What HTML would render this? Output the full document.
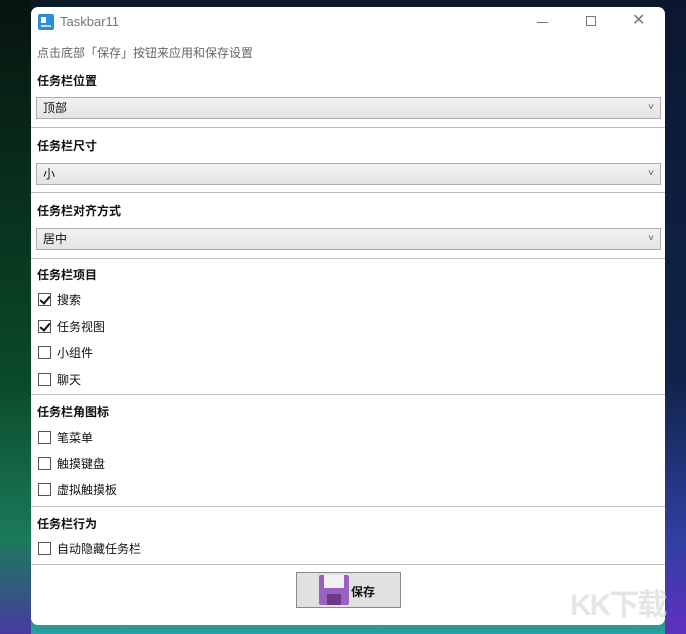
<!DOCTYPE html>
<html><head><meta charset="utf-8"><style>
*{margin:0;padding:0;box-sizing:border-box}
body{width:686px;height:634px;overflow:hidden;position:relative;font-family:"Liberation Sans","Noto Sans CJK SC",sans-serif;font-size:12px;color:#111;
background:linear-gradient(180deg,#0b1a26 0%,#0a2a2a 40%,#0c3a38 70%,#1f7a6a 92%,#2aa0a0 100%)}
.bgl{position:absolute;left:0;top:0;width:31px;height:634px;background:linear-gradient(180deg,#07140f,#0a4a2a 60%,#1b7a5a 85%,#4a3aa0)}
.bgr{position:absolute;right:0;top:0;width:21px;height:634px;background:linear-gradient(180deg,#0b1730,#10244a 60%,#3040a0 85%,#6030c0)}
.win{position:absolute;left:31px;top:7px;width:634px;height:618px;background:#fff;border-radius:7px;overflow:hidden}
.a{position:absolute}
.t{position:absolute;left:6px;font-size:12px}
.b{font-weight:bold}
.combo{position:absolute;left:5px;width:625px;height:22px;background:linear-gradient(#f2f2f2,#e4e4e4);border:1px solid #adadad;padding-left:6px;line-height:20px;font-size:12px}
.combo:after{content:"˅";position:absolute;right:6px;top:0;font-size:10px;color:#555}
.sep{position:absolute;left:0;width:634px;height:1px;background:#bdbdbd}
.cb{position:absolute;left:7px;width:13px;height:13px;border:1px solid #555;background:#fff}
.cb.on:after{content:"";position:absolute;left:3px;top:0px;width:4px;height:8px;border:solid #111;border-width:0 2px 2px 0;transform:rotate(40deg)}
.cl{position:absolute;left:26px;font-size:12px}
</style></head><body>
<div class="bgl"></div><div class="bgr"></div>
<div class="win">
 <div class="a" style="left:7px;top:7px;width:16px;height:16px;background:#2b8fd6;border-radius:2px"><div class="a" style="left:3px;top:3px;width:5px;height:6px;background:#fff"></div><div class="a" style="left:3px;top:11px;width:10px;height:2px;background:#bde"></div></div>
 <div class="a" style="left:29px;top:7px;font-size:13px;color:#777">Taskbar11</div>
 <div class="a" style="left:506px;top:15px;width:11px;height:1px;background:#777"></div>
 <div class="a" style="left:555px;top:9px;width:10px;height:10px;border:1px solid #777"></div>
 <div class="a" style="left:601px;top:3px;font-size:16px;color:#777">✕</div>
 <div class="t" style="top:37px;color:#666">点击底部「保存」按钮来应用和保存设置</div>
 <div class="t b" style="top:65px">任务栏位置</div>
 <div class="combo" style="top:90px">顶部</div>
 <div class="sep" style="top:120px"></div>
 <div class="t b" style="top:130px">任务栏尺寸</div>
 <div class="combo" style="top:156px">小</div>
 <div class="sep" style="top:185px"></div>
 <div class="t b" style="top:195px">任务栏对齐方式</div>
 <div class="combo" style="top:221px">居中</div>
 <div class="sep" style="top:251px"></div>
 <div class="t b" style="top:259px">任务栏项目</div>
 <div class="cb on" style="top:286px"></div><div class="cl" style="top:284px">搜索</div>
 <div class="cb on" style="top:313px"></div><div class="cl" style="top:311px">任务视图</div>
 <div class="cb" style="top:339px"></div><div class="cl" style="top:337px">小组件</div>
 <div class="cb" style="top:366px"></div><div class="cl" style="top:364px">聊天</div>
 <div class="sep" style="top:387px"></div>
 <div class="t b" style="top:396px">任务栏角图标</div>
 <div class="cb" style="top:424px"></div><div class="cl" style="top:422px">笔菜单</div>
 <div class="cb" style="top:450px"></div><div class="cl" style="top:448px">触摸键盘</div>
 <div class="cb" style="top:476px"></div><div class="cl" style="top:474px">虚拟触摸板</div>
 <div class="sep" style="top:499px"></div>
 <div class="t b" style="top:508px">任务栏行为</div>
 <div class="cb" style="top:535px"></div><div class="cl" style="top:533px">自动隐藏任务栏</div>
 <div class="sep" style="top:557px"></div>
 <div class="a" style="left:265px;top:565px;width:105px;height:36px;background:#e1e1e1;border:1px solid #8a8a8a">
  <div class="a" style="left:22px;top:2px;width:30px;height:30px;background:#9a62c0;border-radius:2px"><div class="a" style="left:5px;top:0;width:20px;height:13px;background:#f4f0f8"></div><div class="a" style="left:8px;top:19px;width:14px;height:11px;background:#6a3a8a"></div></div>
  <div class="a b" style="left:54px;top:10px;font-size:12px">保存</div>
 </div>
</div>
<div class="a" style="left:570px;top:580px;font-size:30px;font-weight:bold;color:rgba(220,220,220,.75);letter-spacing:-2px">KK下载</div>
</body></html>
